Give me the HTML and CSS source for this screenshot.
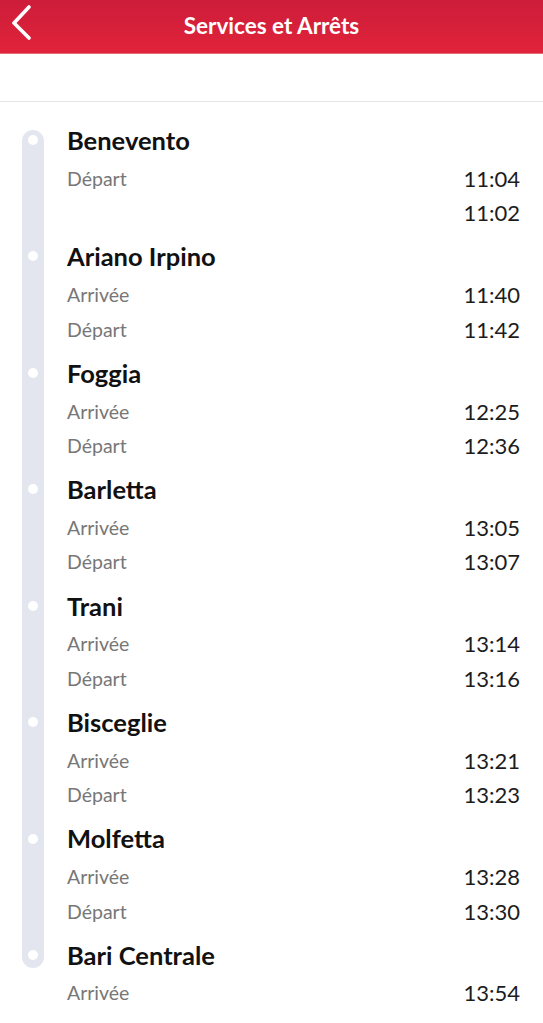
FILE: index.html
```html
<!DOCTYPE html>
<html lang="fr">
<head>
  <meta charset="UTF-8" />
  <meta name="viewport" content="width=device-width, initial-scale=1.0" />
  <title>Services et Arrêts</title>
  <link rel="stylesheet" href="styles.css">
</head>
<body>
  <header class="topbar">
    <button class="back" aria-label="Retour">
      <svg width="24" height="36" viewBox="0 0 24 36">
        <path d="M19 3 L4 19 L19 34" fill="none" stroke="#fff" stroke-width="3.6" stroke-linecap="round" stroke-linejoin="round"/>
      </svg>
    </button>
    <h1>Services et Arrêts</h1>
  </header>

  <div class="band"></div>

  <main class="route">
    <div class="rail">
      <div class="track">
        <span class="dot"></span><span class="dot"></span><span class="dot"></span><span class="dot"></span>
        <span class="dot"></span><span class="dot"></span><span class="dot"></span><span class="dot"></span>
      </div>
    </div>

    <div class="stops">
      <section class="stop">
        <h2>Benevento</h2>
        <div class="row"><span class="label">Départ</span><span class="time">11:04</span></div>
        <div class="row"><span class="label"></span><span class="time">11:02</span></div>
      </section>
      <section class="stop">
        <h2>Ariano Irpino</h2>
        <div class="row"><span class="label">Arrivée</span><span class="time">11:40</span></div>
        <div class="row"><span class="label">Départ</span><span class="time">11:42</span></div>
      </section>
      <section class="stop">
        <h2>Foggia</h2>
        <div class="row"><span class="label">Arrivée</span><span class="time">12:25</span></div>
        <div class="row"><span class="label">Départ</span><span class="time">12:36</span></div>
      </section>
      <section class="stop">
        <h2>Barletta</h2>
        <div class="row"><span class="label">Arrivée</span><span class="time">13:05</span></div>
        <div class="row"><span class="label">Départ</span><span class="time">13:07</span></div>
      </section>
      <section class="stop">
        <h2>Trani</h2>
        <div class="row"><span class="label">Arrivée</span><span class="time">13:14</span></div>
        <div class="row"><span class="label">Départ</span><span class="time">13:16</span></div>
      </section>
      <section class="stop">
        <h2>Bisceglie</h2>
        <div class="row"><span class="label">Arrivée</span><span class="time">13:21</span></div>
        <div class="row"><span class="label">Départ</span><span class="time">13:23</span></div>
      </section>
      <section class="stop">
        <h2>Molfetta</h2>
        <div class="row"><span class="label">Arrivée</span><span class="time">13:28</span></div>
        <div class="row"><span class="label">Départ</span><span class="time">13:30</span></div>
      </section>
      <section class="stop">
        <h2>Bari Centrale</h2>
        <div class="row"><span class="label">Arrivée</span><span class="time">13:54</span></div>
      </section>
    </div>
  </main>
</body>
</html>
```

FILE: styles.css
```css
body {
  margin: 0;
  font-family: Lato, "Open Sans", sans-serif;
  background-color: #fff;
  color: #111;
  overflow: hidden;
}

.topbar {
  height: 54px;
  display: flex;
  align-items: center;
  justify-content: center;
  background: linear-gradient(#cd1d3a, #e1233a);
  border-bottom: 1px solid #e86a78;
  box-sizing: border-box;
  position: relative;
}

.topbar h1 {
  margin: 0 0 2px;
  font-size: 22.5px;
  font-weight: 700;
  color: #fff;
}

.back {
  position: absolute;
  left: 10px;
  top: 4px;
  padding: 0;
  border: 0;
  background: none;
}

.band {
  height: 47px;
  border-bottom: 1px solid #e4e4e6;
}

.route {
  display: grid;
  grid-template-columns: 67px 1fr;
  padding-top: 22px;
}

.rail {
  padding-left: 22px;
  padding-top: 6px;
}

.track {
  width: 22px;
  height: 838px;
  box-sizing: border-box;
  padding: 5px 0 8px;
  background-color: #e3e6ee;
  border-radius: 11px;
  display: flex;
  flex-direction: column;
  align-items: center;
  justify-content: space-between;
}

.dot {
  width: 10px;
  height: 10px;
  border-radius: 50%;
  background-color: #fff;
}

.stops {
  padding-right: 23px;
}

.stop {
  height: 116.4px;
}

.stop h2 {
  margin: 0 0 5px;
  height: 32px;
  line-height: 32px;
  font-size: 25.5px;
  font-weight: 700;
  color: #111;
}

.row {
  height: 34.5px;
  display: flex;
  align-items: center;
  justify-content: space-between;
}

.label {
  font-size: 19.5px;
  color: #777;
}

.time {
  font-size: 22px;
  color: #1c1c1c;
}
```
